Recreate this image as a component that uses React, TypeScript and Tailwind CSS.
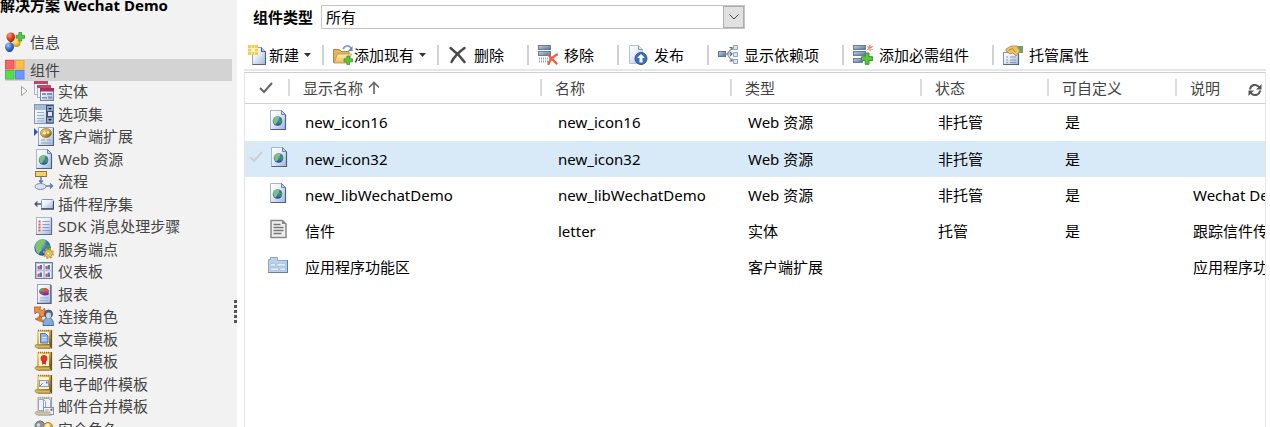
import type { ReactNode } from 'react';

function SharedGradients() {
  return (
    <svg aria-hidden="true" className="absolute size-0">
      <defs>
        <linearGradient id="page" x1="0" y1="0" x2="1" y2="1">
          <stop offset="0" stopColor="#ffffff" />
          <stop offset="0.4" stopColor="#e9f0f9" />
          <stop offset="1" stopColor="#9db4d4" />
        </linearGradient>
        <linearGradient id="gold" x1="0" y1="0" x2="1" y2="1">
          <stop offset="0" stopColor="#f5df8e" />
          <stop offset="0.5" stopColor="#d3a83a" />
          <stop offset="1" stopColor="#5f4614" />
        </linearGradient>
        <linearGradient id="bar" x1="0" y1="0" x2="1" y2="1">
          <stop offset="0" stopColor="#c6d4e8" />
          <stop offset="1" stopColor="#546b90" />
        </linearGradient>
        <linearGradient id="folder" x1="0" y1="0" x2="0" y2="1">
          <stop offset="0" stopColor="#fff0b4" />
          <stop offset="1" stopColor="#e9b95c" />
        </linearGradient>
        <radialGradient id="red" cx="0.35" cy="0.3" r="0.8">
          <stop offset="0" stopColor="#ff9a7a" />
          <stop offset="0.5" stopColor="#dc4420" />
          <stop offset="1" stopColor="#9a1c08" />
        </radialGradient>
        <radialGradient id="blue" cx="0.35" cy="0.3" r="0.8">
          <stop offset="0" stopColor="#a9c8ff" />
          <stop offset="0.5" stopColor="#4272cc" />
          <stop offset="1" stopColor="#1c3c84" />
        </radialGradient>
        <radialGradient id="amber" cx="0.35" cy="0.3" r="0.8">
          <stop offset="0" stopColor="#fff3b0" />
          <stop offset="0.5" stopColor="#f2bd2c" />
          <stop offset="1" stopColor="#b27a08" />
        </radialGradient>
      </defs>
    </svg>
  );
}

function Icon({ children }: { children: ReactNode }) {
  return (
    <svg viewBox="0 0 20 20" aria-hidden="true" className="size-5 shrink-0">
      {children}
    </svg>
  );
}

function Globe({ cx, cy, r }: { cx: number; cy: number; r: number }) {
  return (
    <g transform={`translate(${cx} ${cy}) scale(${r / 10})`}>
      <circle r="10" fill="url(#blue)" />
      <path d="M-7-6C-3-11 3-10 4-7L1-3l-3 2 1 4-4 5C-8 5-10-1-7-6z" fill="#7cc860" />
      <path d="M4-2l4-2c3 4 1 8-2 10L3 4z" fill="#3f9a4a" />
    </g>
  );
}

function Plus({ x, y, s = 1 }: { x: number; y: number; s?: number }) {
  return (
    <path
      transform={`translate(${x} ${y}) scale(${s})`}
      d="M3 0h3v3h3v3H6v3H3V6H0V3h3z"
      fill="#5cc840"
      stroke="#36902a"
      strokeWidth="0.8"
    />
  );
}

const InfoIcon = () => (
  <Icon>
    <path d="M5 8l1 4M9 9l5 3" stroke="#7a7a7a" strokeWidth="1.500" />
    <path d="M1.500 4.500C1.500-1 10-1 10 4.500 10 8 8 10 6 10S1.500 8 1.500 4.500z" fill="url(#red)" />
    <path d="M7.500 11C8 6 16 6 15.500 11 15.500 14 13 15.500 11 15 9 15 7.500 13 7.500 11z" fill="url(#amber)" />
    <path d="M0 14.500C0 9 9 9 9 14.500 9 18 6.500 20 4.500 20S0 18 0 14.500z" fill="url(#blue)" />
    <Plus x={11} y={0.5} s={0.95} />
  </Icon>
);

const ComponentsIcon = () => (
  <Icon>
    <rect x="0.500" y="0.500" width="8.500" height="8.500" fill="#ff6262" stroke="#ec5050" />
    <rect x="10.500" y="0.500" width="8.500" height="8.500" fill="#ffbe4a" stroke="#e8a838" />
    <rect x="0.500" y="10.500" width="8.500" height="8.500" fill="#56dc4c" stroke="#44c43c" />
    <rect x="10.500" y="10.500" width="8.500" height="8.500" fill="#6a98fa" stroke="#5a84e8" />
  </Icon>
);

const EntityIcon = () => (
  <Icon>
    <rect x="0.500" y="0.500" width="13" height="13" fill="#eef3fb" stroke="#a8b4c8" />
    <path d="M0 0h14v3H0z" fill="#b84a70" />
    <rect x="3.500" y="4.500" width="13" height="12" fill="#eef3fb" stroke="#a8b4c8" />
    <path d="M3 4h14v3H3z" fill="#b84a70" />
    <rect x="6.500" y="7.500" width="13" height="12" fill="url(#page)" stroke="#7486a4" />
    <path d="M6 7h14v3.500H6z" fill="#b0305c" />
    <path d="M8 12h4v2H8zM13 12h5v2h-5zM8 16h5v1.500H8zM14 15.500h4v2h-4z" fill="#7c92b8" />
  </Icon>
);

const OptionSetIcon = () => (
  <Icon>
    <rect x="0.500" y="0.500" width="19" height="19" fill="url(#page)" stroke="#8496b4" />
    <path d="M1 1h18v5H1z" fill="#a8bcd8" />
    <path d="M12 1h7.500v18.500H12z" fill="#3f5272" />
    <path d="M13 2h6v5h-6zM13 13.500h6v5h-6z" fill="#8ba3c6" />
    <path d="M14 8h4v4h-4z" fill="#d8e2f0" />
    <path d="M14.200 4h3.600L16 6zM14.200 15h3.600L16 17z" fill="#142034" />
    <path d="M3 8.500h7M3 11.500h7M3 14.500h7M3 17h7" stroke="#9caec8" strokeWidth="1.200" />
  </Icon>
);

const ClientExtensionIcon = () => (
  <Icon>
    <path d="M4.500 1.500h15v18h-15z" fill="url(#page)" stroke="#93a5c2" />
    <path d="M19.500 2v17.500H4" fill="none" stroke="#4c6082" strokeWidth="1.200" />
    <path d="M0 2l4 4-4 4z" fill="#2c58ac" />
    <ellipse cx="12" cy="7" rx="5.500" ry="4.500" fill="url(#gold)" stroke="#8a7438" strokeWidth="0.700" />
    <circle cx="10.500" cy="7" r="1.600" fill="#fff0b8" />
    <circle cx="14" cy="6.500" r="1.300" fill="#fff0b8" />
    <path d="M7 14h4M13 14h4M7 17h10" stroke="#8ea0bc" strokeWidth="1.200" />
  </Icon>
);

const WebResourceIcon = () => (
  <Icon>
    <path d="M2.500 0.500h11l4 4v15h-15z" fill="url(#page)" stroke="#a6b6cf" />
    <path d="M13.500 0.500v4h4z" fill="#c3d0e4" stroke="#5c7090" strokeWidth="0.800" />
    <path d="M17.500 5v14.500h-15" fill="none" stroke="#4d6284" strokeWidth="1.200" />
    <Globe cx={9.5} cy={11} r={4.8} />
  </Icon>
);

const ProcessIcon = () => (
  <Icon>
    <rect x="1.500" y="0.500" width="11" height="5" fill="#fcd060" stroke="#8e7444" />
    <path d="M7 6v7M5 9.500l2 2 2-2M11 15h7M16 12.500l2.500 2.500-2.500 2.500" fill="none" stroke="#5c78bc" strokeWidth="1.400" />
    <ellipse cx="6.500" cy="15.500" rx="5.500" ry="3" fill="#d8e2f6" stroke="#7888b4" />
  </Icon>
);

const PluginIcon = () => (
  <Icon>
    <rect x="7.500" y="5.500" width="12" height="9" rx="1" fill="url(#page)" stroke="#8496b4" />
    <path d="M7 15h12.500V7" fill="none" stroke="#3c5070" strokeWidth="1.300" />
    <path d="M7 10H1M3.500 7.500L1 10l2.500 2.500" fill="none" stroke="#4c5666" strokeWidth="1.300" />
  </Icon>
);

const SdkStepIcon = () => (
  <Icon>
    <rect x="2.500" y="1.500" width="15" height="17" fill="url(#page)" stroke="#a4b4cc" />
    <path d="M2 18.500h15.500V2" fill="none" stroke="#5c6e8a" strokeWidth="1.200" />
    <path d="M4.500 5.500h2M4.500 8.500h2M4.500 11.500h2M4.500 14.500h2" stroke="#f05050" strokeWidth="2" />
    <path d="M8.500 5.500h7M8.500 8.500h7M8.500 11.500h7M8.500 14.500h7" stroke="#8a9ebe" strokeWidth="1" />
  </Icon>
);

const EndpointIcon = () => (
  <Icon>
    <Globe cx={8.5} cy={8.5} r={8.3} />
    <circle cx="14.500" cy="14.500" r="3.800" fill="#f0c95c" stroke="#a8843a" strokeWidth="0.700" />
    <circle cx="14.500" cy="14.500" r="4.700" fill="none" stroke="#c8a044" strokeWidth="1.600" strokeDasharray="2 1.690" />
    <circle cx="14.500" cy="14.500" r="1.500" fill="#fff" stroke="#a8843a" strokeWidth="0.600" />
  </Icon>
);

const DashboardIcon = () => (
  <Icon>
    <rect x="1.500" y="1.500" width="17" height="16" fill="#b4c4de" stroke="#6c80a2" />
    <path d="M3 3h6v6H3zM11 3h6v6h-6zM3 10.500h6v6H3zM11 10.500h6v6h-6z" fill="#f6f9fe" />
    <path d="M3.500 5h2.200v3.500H3.500zM11.500 5h2.200v3.500h-2.200zM3.500 12.500h2.200V16H3.500zM11.500 12.500h2.200V16h-2.200z" fill="#d0487c" />
    <path d="M5.700 4H8v4.500H5.700zM13.700 4H16v4.500h-2.300zM5.700 11.500H8V16H5.700zM13.700 11.500H16V16h-2.300z" fill="#4c70cc" />
  </Icon>
);

const ReportIcon = () => (
  <Icon>
    <rect x="3.500" y="0.500" width="13" height="19" fill="url(#page)" stroke="#93a6c4" />
    <path d="M3 19.300h14V1" fill="none" stroke="#4c607e" strokeWidth="1.300" />
    <ellipse cx="10" cy="7.500" rx="5" ry="3.500" fill="#d82c70" />
    <path d="M10 7.500V4c-3 0-5 1.700-5 3.500z" fill="#58ac58" />
    <path d="M10 7.500V4c3 0 5 1.700 5 3.500z" fill="#ee5040" />
    <path d="M10 9h5c0 3-5 3-7 1.500z" fill="#3c4cb4" />
    <path d="M6 14h8M6 16.500h8" stroke="#9cadc8" />
  </Icon>
);

const ConnectionRoleIcon = () => (
  <Icon>
    <path d="M0 1l7 0-1.500 2.500 3 1 2-2.500L12 10 5 11l1-3-3-2-2 2z" fill="#ee8c48" stroke="#a45a24" strokeWidth="0.800" />
    <path d="M1 13l6-3 2 6-4-1z" fill="#e07a2c" stroke="#a45a24" strokeWidth="0.600" />
    <path d="M9 19.500c0-6 2-8 5-8s5.500 2 5.500 8z" fill="#80acdc" stroke="#4c6c98" />
    <circle cx="14.500" cy="8" r="4" fill="#5a6a84" stroke="#3c4a62" strokeWidth="0.800" />
    <ellipse cx="14.500" cy="9.500" rx="2.500" ry="3" fill="#c4d4e6" />
  </Icon>
);

function TemplateIcon({ children, pale = false }: { children: ReactNode; pale?: boolean }) {
  return (
    <Icon>
      <path d="M3 1h14.500v17H3z" fill={pale ? '#d9cfae' : 'url(#gold)'} />
      <path d="M17.500 1v18H4" fill="none" stroke={pale ? '#a4a08c' : '#6a5220'} strokeWidth="1.200" />
      <path d="M5 3h10v12H5z" fill="#fdf3cc" />
      {children}
      <path d="M1 16.500c2-2 3 0 5-0.500h10v3H4c-2 0-3-1-3-2.500z" fill={pale ? '#cfc59f' : '#dcb554'} stroke={pale ? '#aca48a' : '#957838'} strokeWidth="0.800" />
      <path d="M4 1.500h12" stroke={pale ? '#aca48a' : '#957838'} strokeWidth="1.500" strokeDasharray="1 1" />
    </Icon>
  );
}

const ArticleTemplateIcon = () => (
  <TemplateIcon>
    <path d="M6.500 4.500h5l2.500 2.500v7H6.500z" fill="#8cb0e8" stroke="#4c74b8" />
    <path d="M8 8.500h4.500M8 11h4.500" stroke="#e4eefc" />
  </TemplateIcon>
);

const ContractTemplateIcon = () => (
  <TemplateIcon>
    <path d="M8.500 8l-0.500 6 2-1.500 2 1.500-0.500-6z" fill="#c42020" />
    <circle cx="10" cy="7.500" r="3" fill="#ee3428" stroke="#cc2820" />
  </TemplateIcon>
);

const EmailTemplateIcon = () => (
  <TemplateIcon>
    <rect x="5.500" y="6.500" width="9" height="6" fill="#e6effb" stroke="#88a0c4" />
    <path d="M6 12l3-3" stroke="#7c94b8" />
    <path d="M12 7.500h1.500v2H12z" fill="#c84040" />
  </TemplateIcon>
);

const MailMergeTemplateIcon = () => (
  <TemplateIcon pale>
    <path d="M4.500 3.500h5l2 2v9h-7zM9.500 2.500h5l2 2v8h-7z" fill="#edf3fc" stroke="#93a8ca" />
    <rect x="9.500" y="11.500" width="10" height="7" fill="#f2f6fc" stroke="#8094b4" />
    <path d="M11 14h4M11 16h3" stroke="#93a8ca" />
    <path d="M16.500 12.500h2V15h-2z" fill="#d04848" />
  </TemplateIcon>
);

const SecurityRoleIcon = () => (
  <Icon>
    <circle cx="6" cy="7" r="5" fill="#8b8f96" stroke="#6c7078" />
    <circle cx="4.500" cy="6" r="1.800" fill="#d8dade" />
    <path d="M8 10l8 9" stroke="#686c73" strokeWidth="3" />
    <circle cx="14" cy="8" r="4.500" fill="url(#amber)" stroke="#a47c2c" />
    <circle cx="14" cy="6.500" r="1.500" fill="#fff6cc" />
  </Icon>
);

const NewIcon = () => (
  <Icon>
    <path d="M4.500 2.500h9l4 4v13h-13z" fill="url(#page)" stroke="#8ea2c2" />
    <path d="M13.500 2.500v4h4z" fill="#b4c6e0" />
    <path d="M13.500 2.500v4h4v13h-13" fill="none" stroke="#4a628a" strokeWidth="1.100" />
    <path d="M0 0h10v10H0z" fill="#fbe9a4" />
    <path d="M0 0h3v3H0zM4 0h2v3H4zM7 0h3v3H7zM0 4h3v2H0zM7 4h3v2H7zM0 7h3v3H0zM4 7h2v3H4zM7 7h3v3H7z" fill="#f4cc50" />
    <path d="M3 3h4v4H3z" fill="#fff4bc" />
  </Icon>
);

const AddExistingIcon = () => (
  <Icon>
    <path d="M0.500 4.500h6l1.500 2h8v11H0.500z" fill="#e2b65c" stroke="#b08844" />
    <path d="M4.500 9h14l-4 9H1z" fill="url(#folder)" stroke="#bc9048" strokeWidth="0.800" />
    <path d="M10 4c2-4 6-4 8-1" fill="none" stroke="#8ea2bc" strokeWidth="1.800" />
    <path d="M19.500 1v5H15z" fill="#6c84a6" />
    <Plus x={11} y={11} s={0.95} />
  </Icon>
);

const DeleteIcon = () => (
  <Icon>
    <path d="M2.500 3c4 3 10 8.500 14 14M16.500 3C11 7 6 12 3.500 17" fill="none" stroke="#484848" strokeWidth="2.500" strokeLinecap="round" />
  </Icon>
);

function StackedBars() {
  return (
    <>
      <rect x="0.500" y="0.500" width="12" height="4" fill="url(#bar)" stroke="#687c9c" />
      <rect x="0.500" y="6.500" width="12" height="4" fill="url(#bar)" stroke="#687c9c" />
    </>
  );
}

const RemoveIcon = () => (
  <Icon>
    <StackedBars />
    <path d="M1 13.500h11M1 16.500h11" stroke="#97a3b6" strokeWidth="2" strokeDasharray="1 1" />
    <path d="M10.500 10l8 8.500M19 9.500c-4 2-7 5-8.500 9.500" fill="none" stroke="#f05c40" strokeWidth="2.400" strokeLinecap="round" />
  </Icon>
);

const PublishIcon = () => (
  <Icon>
    <path d="M1.500 0.500h9l4 4v14h-13z" fill="url(#page)" stroke="#b4c2d8" />
    <path d="M10.500 0.500v4h4" fill="#dce6f4" stroke="#8094b4" />
    <circle cx="13" cy="13.500" r="6" fill="#3470c0" stroke="#2a5496" />
    <path d="M13 9l4 4h-2.500v4.500h-3V13H9z" fill="#fff" />
  </Icon>
);

const DependencyIcon = () => (
  <Icon>
    <path d="M7 9h7M9 9l5-6M9 9l5 7" fill="none" stroke="#8492a8" strokeWidth="1.200" />
    <path d="M11.500 2.500H14V5M12 7l2 2-2 2M14 13.500V16h-2.500" fill="none" stroke="#5c6c86" strokeWidth="1.200" />
    <rect x="0.500" y="6.500" width="7" height="5" fill="url(#bar)" stroke="#62748f" />
    <path d="M15.500 0.500h4v4h-4zM15.500 7.500h4v4h-4zM15.500 14.500h4v4h-4z" fill="#dce6f4" stroke="#8fa2c0" />
  </Icon>
);

const AddRequiredIcon = () => (
  <Icon>
    <StackedBars />
    <rect x="0.500" y="13.500" width="9" height="4" fill="url(#bar)" stroke="#687c9c" />
    <path d="M17 0v6M14.300 1.500l5.400 3M19.700 1.500l-5.400 3" stroke="#f47868" strokeWidth="1.200" />
    <Plus x={8.5} y={8} s={1.25} />
  </Icon>
);

const ManagedPropertiesIcon = () => (
  <Icon>
    <rect x="0.500" y="7.500" width="15" height="12" fill="url(#page)" stroke="#7c92b4" />
    <path d="M0.500 19.500h15V9" fill="none" stroke="#4c6690" strokeWidth="1.200" />
    <path d="M3 12h2M3 15h2M3 17.500h2M7 12h6M7 15h6M7 17.500h6" stroke="#8299bd" strokeWidth="1.200" />
    <path d="M13 1h7v7h-4z" fill="#6c9c78" />
    <path d="M3 4l5-3h6l3 5-4 5-3-3-3 1-4-3z" fill="#ecc060" stroke="#a88040" strokeWidth="0.700" />
    <path d="M5.500 5.500l4-2 3 4" fill="none" stroke="#b08840" />
  </Icon>
);

const LetterIcon = () => (
  <Icon>
    <path d="M3 1.500h11.500l3.500 3.500v13.500H3z" fill="#efefef" stroke="#888" strokeWidth="1.500" />
    <path d="M14 1.500V5h4z" fill="#888" />
    <path d="M5.500 5.500h7M5.500 8.500h10M5.500 11.500h10M5.500 14.500h8" stroke="#777" strokeWidth="1.500" />
  </Icon>
);

const RibbonIcon = () => (
  <Icon>
    <path d="M0.500 17.500v-13h2v-2h7v3h10v12z" fill="#b9d2ea" stroke="#90a8c8" />
    <path d="M19.500 5v12.500H0.500" fill="none" stroke="#64809f" strokeWidth="1.200" />
    <path d="M2.500 8.500h5v2.500h-5zM9 8.500h8.500v2.500H9zM2.500 13h8v2.500h-8zM12 13h5.500v2.500H12z" fill="#e2effa" stroke="#9cb8d6" strokeWidth="0.600" />
  </Icon>
);

function CheckMark() {
  return (
    <svg viewBox="0 0 14 12" aria-hidden="true" className="h-3 w-3.5 shrink-0">
      <path d="M1 6l4 4 8-9" fill="none" stroke="currentColor" strokeWidth="2" />
    </svg>
  );
}

const treeItems = [
  { label: '实体', icon: EntityIcon, expandable: true },
  { label: '选项集', icon: OptionSetIcon },
  { label: '客户端扩展', icon: ClientExtensionIcon },
  { label: 'Web 资源', icon: WebResourceIcon },
  { label: '流程', icon: ProcessIcon },
  { label: '插件程序集', icon: PluginIcon },
  { label: 'SDK 消息处理步骤', icon: SdkStepIcon },
  { label: '服务端点', icon: EndpointIcon },
  { label: '仪表板', icon: DashboardIcon },
  { label: '报表', icon: ReportIcon },
  { label: '连接角色', icon: ConnectionRoleIcon },
  { label: '文章模板', icon: ArticleTemplateIcon },
  { label: '合同模板', icon: ContractTemplateIcon },
  { label: '电子邮件模板', icon: EmailTemplateIcon },
  { label: '邮件合并模板', icon: MailMergeTemplateIcon },
  { label: '安全角色', icon: SecurityRoleIcon },
];

const actions = [
  { label: '新建', icon: NewIcon, menu: true },
  { label: '添加现有', icon: AddExistingIcon, menu: true },
  { label: '删除', icon: DeleteIcon },
  { label: '移除', icon: RemoveIcon },
  { label: '发布', icon: PublishIcon },
  { label: '显示依赖项', icon: DependencyIcon },
  { label: '添加必需组件', icon: AddRequiredIcon },
  { label: '托管属性', icon: ManagedPropertiesIcon },
];

const rows = [
  { icon: WebResourceIcon, cells: ['new_icon16', 'new_icon16', 'Web 资源', '非托管', '是', ''] },
  { icon: WebResourceIcon, cells: ['new_icon32', 'new_icon32', 'Web 资源', '非托管', '是', ''], active: true },
  { icon: WebResourceIcon, cells: ['new_libWechatDemo', 'new_libWechatDemo', 'Web 资源', '非托管', '是', 'Wechat Demo'] },
  { icon: LetterIcon, cells: ['信件', 'letter', '实体', '托管', '是', '跟踪信件传送'] },
  { icon: RibbonIcon, cells: ['应用程序功能区', '', '客户端扩展', '', '', '应用程序功能区'] },
];

function Sidebar() {
  return (
    <aside className="flex w-[237px] shrink-0 bg-[#f2f2f2] text-[#444]">
      <div className="min-w-0 flex-1">
        <h1 className="-mt-[5px] h-5 text-[15px] leading-5 font-bold text-black">解决方案 Wechat Demo</h1>
        <nav className="pr-0.5 pl-[5px]">
          <a href="#info" className="mt-4 flex h-[22px] items-center gap-[5px]">
            <InfoIcon />
            信息
          </a>
          <a href="#components" className="mt-1.5 flex h-[22px] items-center gap-[5px] bg-[#d3d3d3]">
            <ComponentsIcon />
            组件
          </a>
          <ul className="-mt-px grid h-[360px] grid-rows-16">
            {treeItems.map(({ label, icon: ItemIcon, expandable }) => (
              <li key={label} className="flex min-h-0 items-center">
                <span className="flex w-[29px] justify-center pl-2">
                  {expandable && (
                    <svg viewBox="0 0 8 12" aria-hidden="true" className="h-3 w-2">
                      <path d="M1.500 1.500v9L7 6z" fill="#fff" stroke="#a0a0a0" />
                    </svg>
                  )}
                </span>
                <a href={`#${label}`} className="flex items-center gap-1">
                  <ItemIcon />
                  {label}
                </a>
              </li>
            ))}
          </ul>
        </nav>
      </div>
      <div className="mt-[300px] flex w-[3px] flex-col gap-0.5">
        {[0, 1, 2, 3, 4].map((dot) => (
          <span key={dot} className="h-[3px] bg-[#555]" />
        ))}
      </div>
    </aside>
  );
}

function Toolbar() {
  return (
    <div role="toolbar" className="mt-3.5 flex h-7 items-center overflow-hidden border-b-2 border-[#e6e6e6] pb-0.5 pl-1">
      {actions.map(({ label, icon: ActionIcon, menu }, index) => (
        <div key={label} className="flex shrink-0 items-center">
          {index > 0 && <span className="mr-[9px] h-5 w-0.5 bg-[#cfd2d8]" />}
          <button type="button" className={menu ? 'flex items-center gap-px pr-[11px]' : 'flex items-center gap-1.5 pr-[23px]'}>
            <ActionIcon />
            {label}
            {menu && (
              <svg viewBox="0 0 7 4" aria-hidden="true" className="ml-1 h-1 w-[7px]">
                <path d="M0 0h7L3.500 4z" fill="#333" />
              </svg>
            )}
          </button>
        </div>
      ))}
    </div>
  );
}

function HeaderLabel({ children }: { children: ReactNode }) {
  return <div className="flex h-[17px] items-center border-l-2 border-[#dcdcdc] pl-[13px]">{children}</div>;
}

function ComponentTable() {
  return (
    <div className="mt-px flex-1 overflow-hidden border-t border-r border-l border-t-[#cfcfcf] border-r-[#e6e6e6] border-l-[#e6e6e6]">
      <table className="w-full table-fixed border-collapse">
        <colgroup>
          <col className="w-[43px]" />
          <col className="w-[252px]" />
          <col className="w-[190px]" />
          <col className="w-[190px]" />
          <col className="w-[127px]" />
          <col className="w-[128px]" />
          <col />
        </colgroup>
        <thead>
          <tr className="h-[30px] border-b border-[#d0d0d0] text-left text-[#444] *:p-0 *:font-normal">
            <th>
              <button type="button" aria-label="全选" className="flex pl-3.5 text-[#666]">
                <CheckMark />
              </button>
            </th>
            <th>
              <HeaderLabel>
                显示名称
                <svg viewBox="0 0 12 13" aria-hidden="true" className="ml-[5px] h-[13px] w-3">
                  <path d="M6 13V1.500M1 6.500l5-5 5 5" fill="none" stroke="#666" strokeWidth="1.600" />
                </svg>
              </HeaderLabel>
            </th>
            <th><HeaderLabel>名称</HeaderLabel></th>
            <th><HeaderLabel>类型</HeaderLabel></th>
            <th><HeaderLabel>状态</HeaderLabel></th>
            <th><HeaderLabel>可自定义</HeaderLabel></th>
            <th>
              <HeaderLabel>
                <span className="flex-1">说明</span>
                <button type="button" aria-label="刷新" className="mr-[3px] text-[#555]">
                  <svg viewBox="0 0 14 14" aria-hidden="true" className="mt-1 size-3.5">
                    <path d="M2 6.500C2.500 1.500 8.500 0.500 11 4M12 7.500c-0.500 5-6.500 6-9 2.500" fill="none" stroke="currentColor" strokeWidth="2" />
                    <path d="M13.500 1v5.500H8zM0.500 13V7.500H6z" fill="currentColor" />
                  </svg>
                </button>
              </HeaderLabel>
            </th>
          </tr>
        </thead>
        <tbody>
          {rows.map(({ icon: RowIcon, cells, active }, index) => (
            <tr key={index} className={active ? 'h-9 bg-[#d8eaf7]' : 'h-9 first:h-[38px]'}>
              <td className="p-0">
                <div className="flex w-[43px] items-center gap-1.5 pb-1 pl-1 text-[#cfcfcf]">
                  <span className="w-3.5">{active && <CheckMark />}</span>
                  <RowIcon />
                </div>
              </td>
              {cells.map((cell, column) => (
                <td key={column} className="overflow-hidden py-0 pr-0 pl-[18px] whitespace-nowrap first-of-type:pl-0 nth-2:pl-[17px]">
                  {cell}
                </td>
              ))}
            </tr>
          ))}
        </tbody>
      </table>
    </div>
  );
}

export default function App() {
  return (
    <div className="flex h-screen overflow-hidden bg-white font-['Noto_Sans','Noto_Sans_CJK_SC',sans-serif] text-[15px] leading-5 text-black">
      <SharedGradients />
      <Sidebar />
      <main className="flex min-w-0 flex-1 flex-col pr-1 pl-[7px]">
        <div className="flex items-center gap-2 pt-[5px] pl-[9px]">
          <label htmlFor="component-type" className="font-bold">组件类型</label>
          <div className="relative w-[424px]">
            <select id="component-type" className="block h-6 w-full appearance-none border border-[#c4c4c4] bg-white pl-1 leading-5">
              <option>所有</option>
            </select>
            <span className="pointer-events-none absolute inset-y-px right-px flex w-[21px] items-center justify-center border border-[#adadad] bg-[#e1e1e1]">
              <svg viewBox="0 0 10 6" aria-hidden="true" className="h-1.5 w-2.5">
                <path d="M0.500 0.500L5 5l4.500-4.500" fill="none" stroke="#444" />
              </svg>
            </span>
          </div>
        </div>
        <Toolbar />
        <ComponentTable />
      </main>
    </div>
  );
}
